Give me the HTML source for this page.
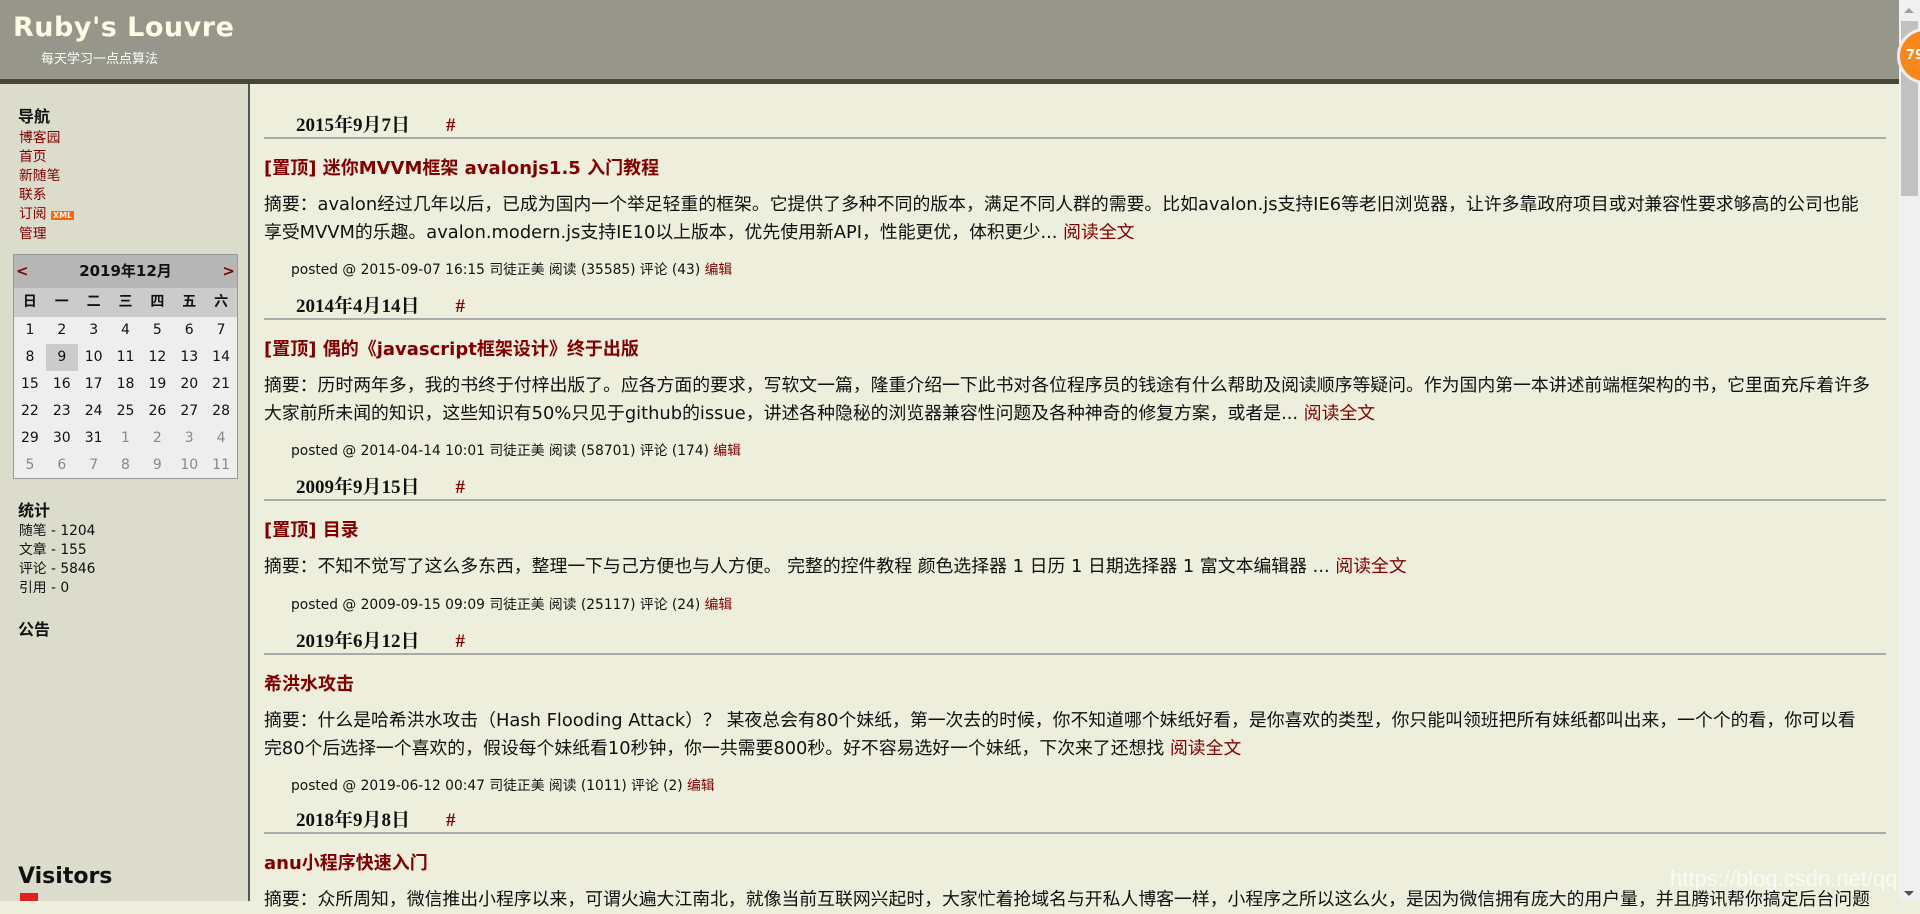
<!DOCTYPE html>
<html><head><meta charset="utf-8">
<style>
*{margin:0;padding:0;box-sizing:border-box}
body{width:1920px;height:901px;overflow:hidden;background:#eeeedd;font-family:"DejaVu Sans","Noto Sans CJK SC",sans-serif;color:#111;position:relative}
#hdr{position:absolute;left:0;top:0;width:1899px;height:79px;background:#96968a}
#band{position:absolute;left:0;top:79px;width:1899px;height:5px;background:#48483a}
#hdr h1{position:absolute;left:13px;top:12px;font:bold 27px "DejaVu Sans",sans-serif;color:#fffbe6;letter-spacing:0.5px}
#hdr .sub{position:absolute;left:41px;top:48px;font-size:13px;color:#fff}
#side{position:absolute;left:0;top:84px;width:250px;height:817px;background:#dcdccc;border-right:2px solid #555}
.a{color:#800000}
#side h3{position:absolute;left:18px;font-size:16px;font-weight:bold}
.nav{position:absolute;left:19px;top:129px;font-size:13.8px;line-height:19px}
#cal{position:absolute;left:13px;top:254px;width:225px;height:225px;border:1px solid #999;background:#eeeeee;font-size:14px}
#cal .t{height:33px;background:#b6b6b6;position:relative;text-align:center;line-height:33px;font-weight:bold;font-size:15px}
#cal .t span{position:absolute;top:0;color:#800000}
#cal .w{height:29px;background:#cbcbcb;display:flex;font-weight:bold}
#cal .r{display:flex;height:27px}
#cal .r div,#cal .w div{width:32px;text-align:center;line-height:27px}
#cal .w div{line-height:29px}
.g{color:#888}
.stat{position:absolute;left:19px;top:522px;font-size:13.8px;line-height:19px}
#main{position:absolute;left:264px;top:84px;width:1622px}
.dt{position:absolute;left:32px;font:bold 19px "Liberation Serif","Noto Serif CJK SC",serif;white-space:nowrap}
.dt b{color:#800000;margin-left:36px}
.hr{position:absolute;left:0;width:1622px;height:2px;background:#aaa}
.tt{position:absolute;left:0;font-weight:bold;font-size:18px;color:#800000;white-space:nowrap}
.sm{position:absolute;left:0;font-size:17.85px;line-height:28px;white-space:nowrap}
.ps{position:absolute;left:27px;font-size:13.8px;white-space:nowrap}
#sb{position:absolute;left:1899px;top:0;width:21px;height:901px;background:#f0f0f0}
#thumb{position:absolute;left:1901px;top:21px;width:17px;height:175px;background:#c1c1c1}
</style></head><body>
<div id="hdr"><h1>Ruby's Louvre</h1><div class="sub">每天学习一点点算法</div></div>
<div id="band"></div>
<div id="side">
<h3 style="top:19px">导航</h3>
</div>
<div class="nav"><div class="a">博客园</div><div class="a">首页</div><div class="a">新随笔</div><div class="a">联系</div><div class="a">订阅 <span style="background:#f60;color:#fff;font-size:8px;padding:0 2px;font-weight:bold">XML</span></div><div class="a">管理</div></div>
<div id="cal">
<div class="t"><span style="left:2px">&lt;</span>2019年12月<span style="right:2px">&gt;</span></div>
<div class="w"><div>日</div><div>一</div><div>二</div><div>三</div><div>四</div><div>五</div><div>六</div></div>
<div class="r"><div>1</div><div>2</div><div>3</div><div>4</div><div>5</div><div>6</div><div>7</div></div>
<div class="r"><div>8</div><div style="background:#cbcbcb">9</div><div>10</div><div>11</div><div>12</div><div>13</div><div>14</div></div>
<div class="r"><div>15</div><div>16</div><div>17</div><div>18</div><div>19</div><div>20</div><div>21</div></div>
<div class="r"><div>22</div><div>23</div><div>24</div><div>25</div><div>26</div><div>27</div><div>28</div></div>
<div class="r"><div>29</div><div>30</div><div>31</div><div class="g">1</div><div class="g">2</div><div class="g">3</div><div class="g">4</div></div>
<div class="r"><div class="g">5</div><div class="g">6</div><div class="g">7</div><div class="g">8</div><div class="g">9</div><div class="g">10</div><div class="g">11</div></div>
</div>
<h3 style="position:absolute;left:18px;top:497px;font-size:16px">统计</h3>
<div class="stat"><div>随笔 - 1204</div><div>文章 - 155</div><div>评论 - 5846</div><div>引用 - 0</div></div>
<h3 style="position:absolute;left:18px;top:616px;font-size:16px">公告</h3>
<div style="position:absolute;left:18px;top:864px;font-size:22px;font-weight:bold">Visitors</div>
<div style="position:absolute;left:20px;top:893px;width:18px;height:8px;background:#d22"></div>

<div id="main">
<div class="dt" style="top:26px">2015年9月7日<b>#</b></div>
<div class="hr" style="top:53px"></div>
<div class="tt" style="top:70px">[置顶] 迷你MVVM框架 avalonjs1.5 入门教程</div>
<div class="sm" style="top:107px">摘要：avalon经过几年以后，已成为国内一个举足轻重的框架。它提供了多种不同的版本，满足不同人群的需要。比如avalon.js支持IE6等老旧浏览器，让许多靠政府项目或对兼容性要求够高的公司也能<br>享受MVVM的乐趣。avalon.modern.js支持IE10以上版本，优先使用新API，性能更优，体积更少... <span class="a">阅读全文</span></div>
<div class="ps" style="top:174px">posted @ 2015-09-07 16:15 司徒正美 阅读 (35585) 评论 (43) <span class="a">编辑</span></div>

<div class="dt" style="top:207px">2014年4月14日<b>#</b></div>
<div class="hr" style="top:234px"></div>
<div class="tt" style="top:251px">[置顶] 偶的《javascript框架设计》终于出版</div>
<div class="sm" style="top:288px">摘要：历时两年多，我的书终于付梓出版了。应各方面的要求，写软文一篇，隆重介绍一下此书对各位程序员的钱途有什么帮助及阅读顺序等疑问。作为国内第一本讲述前端框架构的书，它里面充斥着许多<br>大家前所未闻的知识，这些知识有50%只见于github的issue，讲述各种隐秘的浏览器兼容性问题及各种神奇的修复方案，或者是... <span class="a">阅读全文</span></div>
<div class="ps" style="top:355px">posted @ 2014-04-14 10:01 司徒正美 阅读 (58701) 评论 (174) <span class="a">编辑</span></div>

<div class="dt" style="top:388px">2009年9月15日<b>#</b></div>
<div class="hr" style="top:415px"></div>
<div class="tt" style="top:432px">[置顶] 目录</div>
<div class="sm" style="top:469px">摘要：不知不觉写了这么多东西，整理一下与己方便也与人方便。 完整的控件教程 颜色选择器 1 日历 1 日期选择器 1 富文本编辑器 ... <span class="a">阅读全文</span></div>
<div class="ps" style="top:509px">posted @ 2009-09-15 09:09 司徒正美 阅读 (25117) 评论 (24) <span class="a">编辑</span></div>

<div class="dt" style="top:542px">2019年6月12日<b>#</b></div>
<div class="hr" style="top:569px"></div>
<div class="tt" style="top:586px">希洪水攻击</div>
<div class="sm" style="top:623px">摘要：什么是哈希洪水攻击（Hash Flooding Attack）？ 某夜总会有80个妹纸，第一次去的时候，你不知道哪个妹纸好看，是你喜欢的类型，你只能叫领班把所有妹纸都叫出来，一个个的看，你可以看<br>完80个后选择一个喜欢的，假设每个妹纸看10秒钟，你一共需要800秒。好不容易选好一个妹纸，下次来了还想找 <span class="a">阅读全文</span></div>
<div class="ps" style="top:690px">posted @ 2019-06-12 00:47 司徒正美 阅读 (1011) 评论 (2) <span class="a">编辑</span></div>

<div class="dt" style="top:721px">2018年9月8日<b>#</b></div>
<div class="hr" style="top:748px"></div>
<div class="tt" style="top:765px">anu小程序快速入门</div>
<div class="sm" style="top:802px">摘要：众所周知，微信推出小程序以来，可谓火遍大江南北，就像当前互联网兴起时，大家忙着抢域名与开私人博客一样，小程序之所以这么火，是因为微信拥有庞大的用户量，并且腾讯帮你搞定后台问题</div>
</div>
<div style="position:absolute;left:1670px;top:866px;font:22px 'Liberation Sans',sans-serif;color:rgba(255,255,255,0.7)">https://blog.csdn.net/qq_36232611</div>
<div id="sb"></div><div id="thumb"></div>
<div style="position:absolute;left:1904px;top:8px;border:5px solid transparent;border-bottom:5px solid #a0a0a0;border-top:0"></div>
<div style="position:absolute;left:1904px;top:891px;border:5px solid transparent;border-top:5px solid #505050;border-bottom:0"></div>
<div style="position:absolute;left:1897px;top:28px;width:56px;height:56px;border-radius:50%;background:#f7881e;border:3px solid #eee;color:#fff;font:bold 13px 'DejaVu Sans',sans-serif;line-height:50px;padding-left:6px">79</div>
</body></html>
